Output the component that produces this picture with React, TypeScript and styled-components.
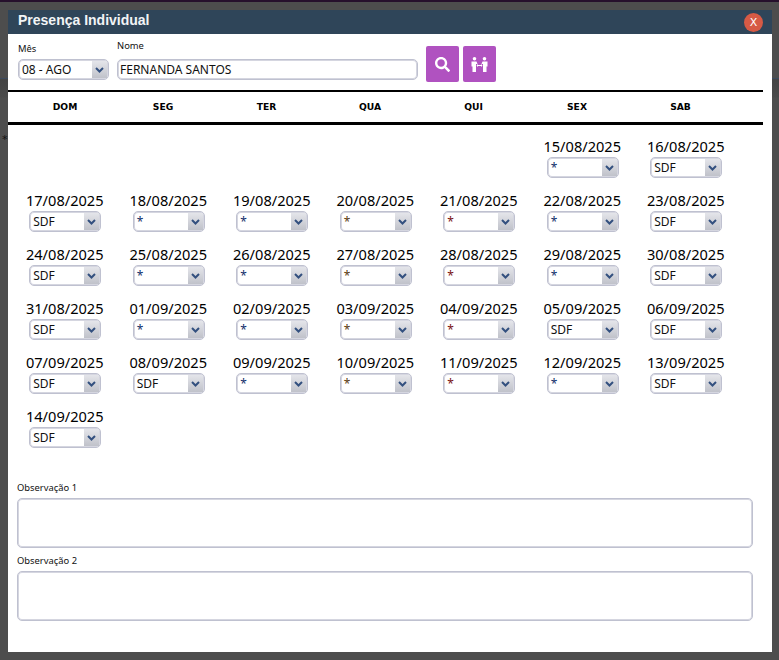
import React from 'react'
import styled, { createGlobalStyle } from 'styled-components'
import { FaSearch } from 'react-icons/fa'

const GlobalStyle = createGlobalStyle`
  html, body {
    margin: 0;
    padding: 0;
    height: 100%;
    overflow: hidden;
    background: #4d4d4d;
  }
`

const Backdrop = styled.div`
  position: relative;
  width: 779px;
  height: 660px;
  overflow: hidden;
  background: linear-gradient(
    to bottom,
    #4d4d4d 0,
    #4d4d4d 76px,
    #3c4a5e 76px,
    #3c4a5e 77px,
    #444 77px,
    #4a4a4a 95px,
    #4d4d4d 96px
  );
  border-top: 2px solid #26102c;
  box-sizing: border-box;
  padding: 8px 7px 8px 8px;
`

const BackdropStar = styled.span`
  position: absolute;
  left: 2px;
  top: 131px;
  font-family: 'DejaVu Sans', sans-serif;
  font-size: 11px;
  color: #111;
`

const Modal = styled.div`
  width: 764px;
  height: 642px;
  background: #fff;
  display: flex;
  flex-direction: column;
`

const Header = styled.div`
  height: 24px;
  flex: none;
  background: #2f4559;
  display: flex;
  justify-content: space-between;
  padding: 0 9px 0 10px;
`

const Title = styled.div`
  font-family: 'Liberation Sans', Arial, sans-serif;
  font-weight: bold;
  font-size: 14px;
  line-height: 20px;
  color: #f2f4f6;
`

const CloseButton = styled.div`
  width: 19px;
  height: 19px;
  margin-top: 3px;
  border-radius: 50%;
  background: #d65a45;
  color: #fff;
  font-family: 'DejaVu Sans', sans-serif;
  font-size: 11px;
  display: flex;
  align-items: center;
  justify-content: center;
`

const Toolbar = styled.div`
  height: 56px;
  flex: none;
  display: flex;
  padding: 6px 0 0 10px;
  box-sizing: border-box;
`

const Field = styled.div<{ $width: number; $labelTop: number }>`
  width: ${(p) => p.$width}px;
  margin-right: 8px;
  padding-top: ${(p) => p.$labelTop}px;
  box-sizing: border-box;
  display: flex;
  flex-direction: column;
  justify-content: space-between;
  height: 40px;
`

const SmallLabel = styled.label`
  font-family: 'Noto Sans', sans-serif;
  font-size: 9.4px;
  line-height: 11px;
  color: #111;
`

const NameInput = styled.div`
  height: 21px;
  box-sizing: border-box;
  border: 1px solid #bfc1d0;
  box-shadow: inset 0 0 0 1px #d5d6e0;
  border-radius: 5px;
  padding-left: 2px;
  font-family: 'Noto Sans', sans-serif;
  font-size: 12px;
  line-height: 19px;
  color: #111;
  background: #fff;
`

const ActionButton = styled.div`
  width: 33px;
  height: 36px;
  margin: 6px 4px 0 0;
  border-radius: 2px;
  background: #b052c0;
  color: #fff;
  display: flex;
  align-items: center;
  justify-content: center;
`

const WeekHeader = styled.div`
  flex: none;
  width: 755px;
  height: 35px;
  box-sizing: border-box;
  border-top: 2px solid #000;
  border-bottom: 3px solid #000;
  display: grid;
  grid-template-columns: 92.5px repeat(6, 103.5px);
  padding: 0 0 2px 10.75px;
  align-items: center;
`

const WeekDay = styled.div`
  text-align: center;
  font-family: 'DejaVu Sans', sans-serif;
  font-weight: bold;
  font-size: 9.2px;
  color: #000;
`

const Calendar = styled.div`
  flex: none;
  display: grid;
  grid-template-columns: repeat(7, 103.5px);
  grid-auto-rows: 54px;
  padding: 11px 0 0 5px;
  height: 357px;
  box-sizing: border-box;
`

const DayCell = styled.div`
  display: flex;
  flex-direction: column;
  align-items: center;
`

const DateText = styled.div`
  font-family: 'Noto Sans', sans-serif;
  font-size: 14.6px;
  line-height: 21px;
  color: #000;
`

const SelectBox = styled.div<{ $width: number; $nudge?: number }>`
  width: ${(p) => p.$width}px;
  height: 21px;
  flex: none;
  margin-left: ${(p) => p.$nudge || 0}px;
  box-sizing: border-box;
  border: 1px solid #bfc1d0;
  box-shadow: inset 0 0 0 1px #d5d6e0;
  border-radius: 5px;
  background: #fff;
  padding: 1px;
  display: flex;
  overflow: hidden;
`

const SelectValue = styled.div<{ $tone?: string }>`
  flex: 1;
  padding-left: 2px;
  font-family: 'Noto Sans', sans-serif;
  font-size: 12px;
  line-height: 17px;
  color: ${(p) => p.$tone || '#111'};
`

const SelectArrow = styled.div`
  width: 15px;
  flex: none;
  background: linear-gradient(#e4e5ea, #c0c2ca);
  display: flex;
  align-items: center;
  justify-content: center;
`

const Notes = styled.div`
  padding: 0 19px 0 9px;
  display: flex;
  flex-direction: column;
`

const NoteLabel = styled.label`
  font-family: 'Noto Sans', sans-serif;
  font-size: 9.4px;
  line-height: 12px;
  height: 16px;
  color: #111;
`

const NoteArea = styled.div`
  height: 50px;
  margin-bottom: 7px;
  box-sizing: border-box;
  border: 1px solid #bfc1d0;
  box-shadow: inset 0 0 0 1px #d5d6e0;
  border-radius: 5px;
  background: #fff;
`

const ArrowIcon = () => (
  <svg width="9" height="6" viewBox="0 0 9 6">
    <path d="M1 1 L4.5 4.5 L8 1" fill="none" stroke="#33507f" strokeWidth="2" />
  </svg>
)

const PeopleIcon = () => (
  <svg width="17" height="15" viewBox="0 0 17 15" fill="#fff">
    <circle cx="3.5" cy="1.8" r="1.8" />
    <circle cx="13.5" cy="1.8" r="1.8" />
    <path d="M0.5 4.5h5l1 2.5h-1.5v8H1.5V9.5H0.5z" />
    <path d="M16.5 4.5h-5l-1 2.5h1.5v8h3.5V9.5h1z" />
    <path d="M5.5 8.5 L7 7 V8 H10 V7 L11.5 8.5 L10 10 V9 H7 V10z" />
  </svg>
)

type Day = { date: string; value: string }

const tones: Record<number, string> = {
  1: '#12306b',
  2: '#12306b',
  3: '#5a3a10',
  4: '#7a1010',
  5: '#12306b'
}

const dates = [
  '15/08/2025', '16/08/2025',
  '17/08/2025', '18/08/2025', '19/08/2025', '20/08/2025', '21/08/2025', '22/08/2025', '23/08/2025',
  '24/08/2025', '25/08/2025', '26/08/2025', '27/08/2025', '28/08/2025', '29/08/2025', '30/08/2025',
  '31/08/2025', '01/09/2025', '02/09/2025', '03/09/2025', '04/09/2025', '05/09/2025', '06/09/2025',
  '07/09/2025', '08/09/2025', '09/09/2025', '10/09/2025', '11/09/2025', '12/09/2025', '13/09/2025',
  '14/09/2025'
]

const holidays = ['05/09/2025', '08/09/2025']

const days: (Day | null)[] = [
  null, null, null, null, null,
  ...dates.map((date, i) => {
    const col = (i + 5) % 7
    const value = col === 0 || col === 6 || holidays.includes(date) ? 'SDF' : '*'
    return { date, value }
  })
]

const weekDays = ['DOM', 'SEG', 'TER', 'QUA', 'QUI', 'SEX', 'SAB']

function App() {
  return (
    <Backdrop>
      <GlobalStyle />
      <BackdropStar>*</BackdropStar>
      <Modal>
        <Header>
          <Title>Presença Individual</Title>
          <CloseButton>X</CloseButton>
        </Header>
        <Toolbar>
          <Field $width={91} $labelTop={3}>
            <SmallLabel>Mês</SmallLabel>
            <SelectBox $width={91}>
              <SelectValue>08 - AGO</SelectValue>
              <SelectArrow>
                <ArrowIcon />
              </SelectArrow>
            </SelectBox>
          </Field>
          <Field $width={301} $labelTop={0}>
            <SmallLabel>Nome</SmallLabel>
            <NameInput>FERNANDA SANTOS</NameInput>
          </Field>
          <ActionButton>
            <FaSearch size={15} />
          </ActionButton>
          <ActionButton>
            <PeopleIcon />
          </ActionButton>
        </Toolbar>
        <WeekHeader>
          {weekDays.map((d) => (
            <WeekDay key={d}>{d}</WeekDay>
          ))}
        </WeekHeader>
        <Calendar>
          {days.map((day, i) =>
            day ? (
              <DayCell key={day.date}>
                <DateText>{day.date}</DateText>
                <SelectBox $width={72} $nudge={1}>
                  <SelectValue $tone={day.value === '*' ? tones[i % 7] : undefined}>{day.value}</SelectValue>
                  <SelectArrow>
                    <ArrowIcon />
                  </SelectArrow>
                </SelectBox>
              </DayCell>
            ) : (
              <div key={i} />
            )
          )}
        </Calendar>
        <Notes>
          <NoteLabel>Observação 1</NoteLabel>
          <NoteArea />
          <NoteLabel>Observação 2</NoteLabel>
          <NoteArea />
        </Notes>
      </Modal>
    </Backdrop>
  )
}

export default App
